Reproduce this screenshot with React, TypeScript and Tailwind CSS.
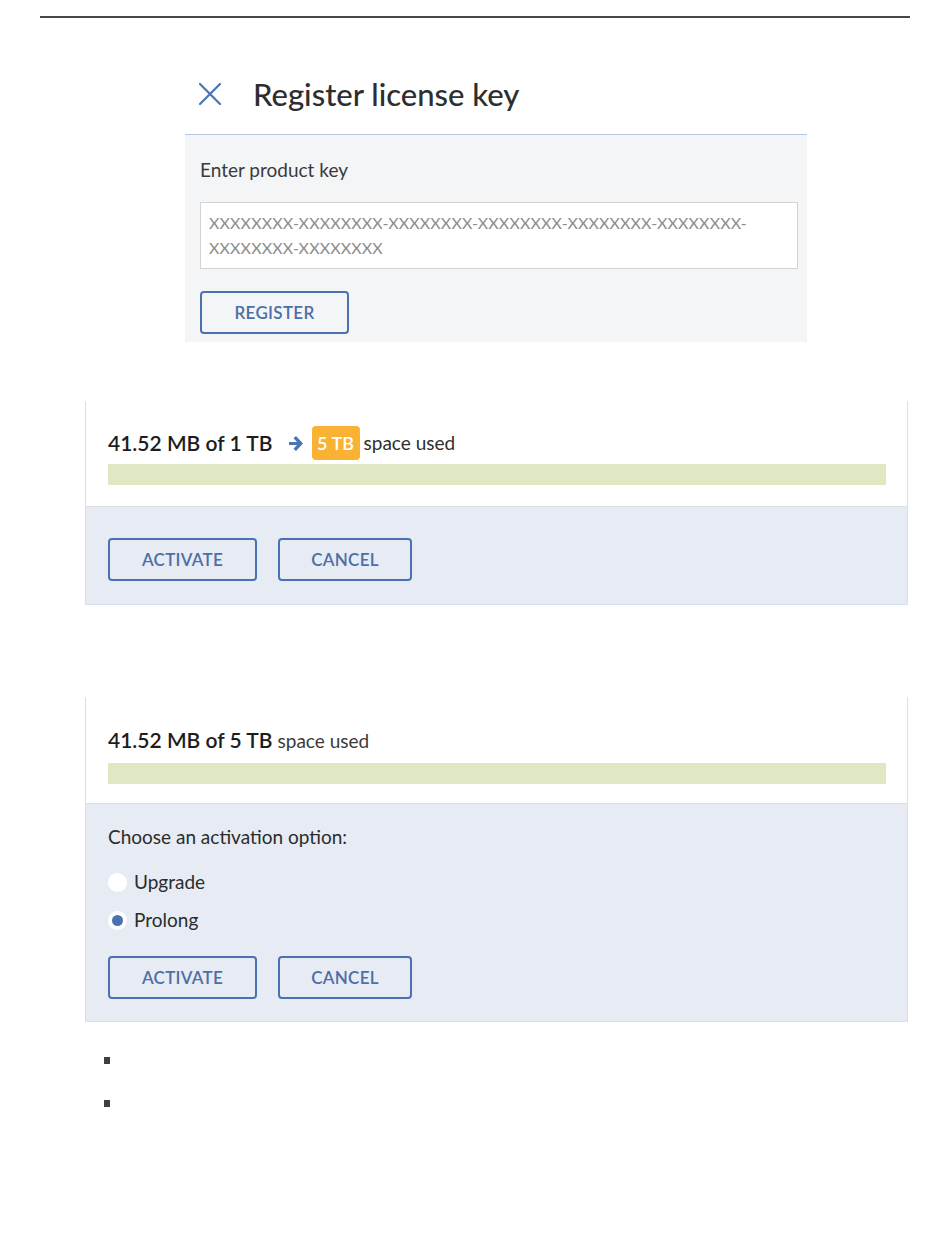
import { useState } from "react";

const font = { fontFamily: "Lato, 'Noto Sans', sans-serif" };

const OutlineButton = ({ label, width }: { label: string; width: string }) => (
  <button
    className={`h-[43px] ${width} rounded-[4px] border-2 border-[#4a72b3] text-[17px] font-semibold tracking-[0.3px] text-[#4d6ea6]`}
  >
    {label}
  </button>
);

const UsageBar = () => <div className="mr-[21px] h-[21px] bg-[#dfe8c2]" />;

const Radio = ({ checked, label, onClick }: { checked: boolean; label: string; onClick: () => void }) => (
  <label className="flex h-[24px] cursor-pointer items-center gap-[7px]" onClick={onClick}>
    <span className="flex h-[19px] w-[19px] items-center justify-center rounded-full bg-white">
      {checked && <span className="h-[11px] w-[11px] rounded-full bg-[#4a72b3]" />}
    </span>
    <span className="text-[19px] leading-[24px] text-[#2b2b2b]">{label}</span>
  </label>
);

export default function App() {
  const [option, setOption] = useState("prolong");

  return (
    <div className="h-[1260px] w-[950px] bg-white" style={font}>
      <div className="pt-[16px]">
        <div className="ml-[40px] h-[2px] w-[870px] bg-[#474747]" />
      </div>

      {/* register license key */}
      <div className="ml-[185px] mt-[42px] w-[622px]">
        <div className="flex h-[74px] items-center pb-[6px]">
          <svg className="ml-[13px] h-[24px] w-[24px]" viewBox="0 0 24 24" fill="none">
            <path d="M2 2 L22 22 M22 2 L2 22" stroke="#4a74b6" strokeWidth="2.2" strokeLinecap="round" />
          </svg>
          <h1 className="ml-[31px] text-[31px] font-medium leading-none text-[#2e2e2e]">Register license key</h1>
        </div>
        <div className="border-t border-[#b4c7e2] bg-[#f4f5f7] pb-[8px] pl-[15px] pr-[9px] pt-[24px]">
          <p className="text-[19px] leading-[22px] text-[#3a3a3a]">Enter product key</p>
          <div className="mt-[21px] h-[67px] border border-[#d3d3d3] bg-white px-[8px] pt-[7px] text-[16px] leading-[25px] tracking-[0.15px] text-[#8c8c8c]">
            XXXXXXXX-XXXXXXXX-XXXXXXXX-XXXXXXXX-XXXXXXXX-XXXXXXXX-
            <br />
            XXXXXXXX-XXXXXXXX
          </div>
          <div className="mt-[22px]">
            <OutlineButton label="REGISTER" width="w-[149px]" />
          </div>
        </div>
      </div>

      {/* card: pending upgrade */}
      <div className="ml-[85px] mt-[59px] w-[823px] border-x border-b border-[#d5dfed]">
        <div className="h-[105px] bg-white pl-[22px] pt-[25px]">
          <div className="flex h-[34px] items-center">
            <span className="text-[21px] font-semibold text-[#1d1d1d]">41.52 MB of 1 TB</span>
            <svg className="ml-[15px] h-[17px] w-[16px]" viewBox="0 0 16 17">
              <path d="M1 7 H9 L5.5 3.3 L8 1 L15 8.5 L8 16 L5.5 13.7 L9 10 H1 Z" fill="#4a74b6" />
            </svg>
            <span className="ml-[8px] flex h-[34px] w-[48px] items-center justify-center rounded-[4px] bg-[#f9b233] text-[18px] font-semibold text-white">
              5 TB
            </span>
            <span className="ml-[4px] text-[19px] text-[#2e2e2e]">space used</span>
          </div>
          <div className="mt-[4px]">
            <UsageBar />
          </div>
        </div>
        <div className="flex h-[98px] gap-[21px] border-t border-[#dcdfe4] bg-[#e6ebf4] pl-[22px] pt-[31px]">
          <OutlineButton label="ACTIVATE" width="w-[149px]" />
          <OutlineButton label="CANCEL" width="w-[134px]" />
        </div>
      </div>

      {/* card: activation options */}
      <div className="ml-[85px] mt-[92px] w-[823px] border-x border-b border-[#d5dfed]">
        <div className="h-[106px] bg-white pl-[22px] pt-[27px]">
          <div className="flex items-baseline">
            <span className="text-[21px] font-semibold text-[#1d1d1d]">41.52 MB of 5 TB</span>
            <span className="ml-[5px] text-[19px] text-[#3a3a3a]">space used</span>
          </div>
          <div className="mt-[7px]">
            <UsageBar />
          </div>
        </div>
        <div className="border-t border-[#dcdfe4] bg-[#e6ebf4] pb-[22px] pl-[22px] pt-[21px]">
          <p className="text-[19px] leading-[24px] text-[#2b2b2b]">Choose an activation option:</p>
          <div className="mt-[21px] flex flex-col gap-[14px]">
            <Radio checked={option === "upgrade"} label="Upgrade" onClick={() => setOption("upgrade")} />
            <Radio checked={option === "prolong"} label="Prolong" onClick={() => setOption("prolong")} />
          </div>
          <div className="mt-[24px] flex gap-[21px]">
            <OutlineButton label="ACTIVATE" width="w-[149px]" />
            <OutlineButton label="CANCEL" width="w-[134px]" />
          </div>
        </div>
      </div>

      <ul className="ml-[104px] mt-[35px] flex flex-col gap-[36px]">
        <li className="flex h-[7px] items-center">
          <span className="h-[7px] w-[6px] bg-[#404040]" />
        </li>
        <li className="flex h-[7px] items-center">
          <span className="h-[7px] w-[6px] bg-[#404040]" />
        </li>
      </ul>
    </div>
  );
}
